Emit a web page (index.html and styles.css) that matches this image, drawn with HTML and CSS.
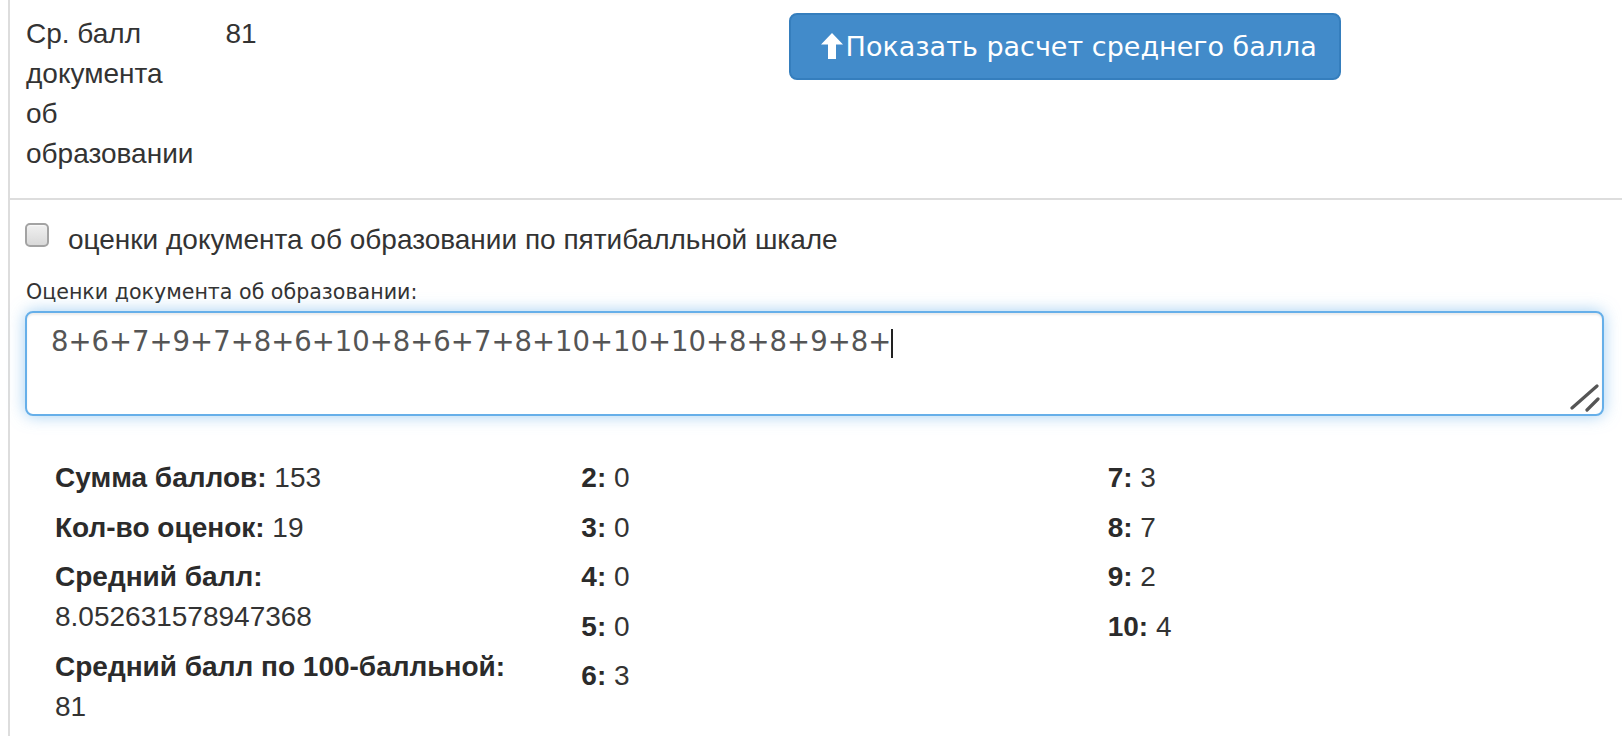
FILE: index.html
```html
<!DOCTYPE html>
<html lang="ru">
<head>
<meta charset="utf-8">
<title>Средний балл документа об образовании</title>
<link rel="stylesheet" href="styles.css">
</head>
<body>
<div class="page">
  <div class="row-top">
    <div class="cell cell-label">Ср. балл документа об образовании</div>
    <div class="cell cell-value">81</div>
    <div class="cell cell-action">
      <button class="btn-primary" type="button">
        <svg class="icon-up" viewBox="0 0 22 26" width="22" height="26" aria-hidden="true"><path d="M11 0 L22 11.5 L15 11.5 L15 26 L7 26 L7 11.5 L0 11.5 Z" fill="#fff"/></svg>
        <span>Показать расчет среднего балла</span>
      </button>
    </div>
  </div>
  <div class="row-main">
    <label class="check">
      <input class="check-box" type="checkbox">
      <span>оценки документа об образовании по пятибалльной шкале</span>
    </label>
    <label class="field-label" for="grades">Оценки документа об образовании:</label>
    <div class="textarea-wrap">
      <textarea id="grades" class="grades is-focused">8+6+7+9+7+8+6+10+8+6+7+8+10+10+10+8+8+9+8+</textarea>
      <span class="caret" aria-hidden="true"></span>
      <svg class="grip" viewBox="0 0 30 30" width="30" height="30" aria-hidden="true"><path d="M2 26 L27 4 M17 28 L28 17" stroke="#555" stroke-width="3.2" stroke-linecap="round" fill="none"/></svg>
    </div>
    <div class="stats">
      <div class="stats-col">
        <div class="stat"><b>Сумма баллов:</b> 153</div>
        <div class="stat"><b>Кол-во оценок:</b> 19</div>
        <div class="stat"><b>Средний балл:</b> <span class="stat-block">8.052631578947368</span></div>
        <div class="stat"><b>Средний балл по 100-балльной:</b> <span class="stat-block">81</span></div>
      </div>
      <div class="stats-col">
        <div class="stat"><b>2:</b> 0</div>
        <div class="stat"><b>3:</b> 0</div>
        <div class="stat"><b>4:</b> 0</div>
        <div class="stat"><b>5:</b> 0</div>
        <div class="stat"><b>6:</b> 3</div>
      </div>
      <div class="stats-col">
        <div class="stat"><b>7:</b> 3</div>
        <div class="stat"><b>8:</b> 7</div>
        <div class="stat"><b>9:</b> 2</div>
        <div class="stat"><b>10:</b> 4</div>
      </div>
    </div>
  </div>
</div>
</body>
</html>
```
FILE: styles.css
```css
* { box-sizing: border-box; }

html, body { height: 100%; }

body {
  margin: 0;
  font-family: "Liberation Sans", Arial, sans-serif;
  font-size: 28px;
  line-height: 40px;
  color: #333;
  background: #fff;
  overflow: hidden;
}

.page {
  margin-left: 8px;
  border-left: 2px solid #ddd;
  min-height: 100%;
}

/* top row */
.row-top {
  display: flex;
  align-items: flex-start;
  border-bottom: 2px solid #ddd;
}

.cell { padding: 14px 16px 24px; }

.cell-label { width: min-content; }

.cell-action { padding: 13px 0 0 516px; }

.btn-primary {
  display: flex;
  align-items: center;
  gap: 3px;
  width: 552px;
  height: 67px;
  padding: 0 0 0 30px;
  background: #428bca;
  border: 2px solid #357ebd;
  border-radius: 8px;
  color: #fff;
  font-family: "DejaVu Sans", Verdana, sans-serif;
  font-size: 27px;
  line-height: 40px;
  cursor: pointer;
}

.icon-up { flex: none; margin-top: -2px; }

/* main row */
.row-main { padding: 20px 18px 0 15px; }

.check {
  display: flex;
  align-items: flex-start;
  gap: 19px;
  font-weight: normal;
}

.check-box {
  appearance: none;
  -webkit-appearance: none;
  flex: none;
  width: 24px;
  height: 24px;
  margin: 3px 0 0 0;
  border: 2px solid #a3a3a3;
  border-radius: 5px;
  background: linear-gradient(#f0f0f0, #d9d9d9);
  box-shadow: inset 0 1px 1px rgba(255,255,255,.6);
}

.field-label {
  display: block;
  margin: 17px 0 4px 1px;
  font-family: "DejaVu Sans", Verdana, sans-serif;
  font-size: 20.6px;
  line-height: 30px;
  color: #333;
}

.textarea-wrap { position: relative; }

.grades {
  display: block;
  width: 100%;
  height: 105px;
  margin: 0;
  padding: 12px 24px;
  border: 2px solid #ccc;
  border-radius: 8px;
  font-family: "DejaVu Sans", Verdana, sans-serif;
  font-size: 27.5px;
  line-height: 33px;
  color: #555;
  resize: none;
  outline: none;
  overflow: hidden;
}

.grades.is-focused {
  border-color: #66afe9;
  box-shadow: inset 0 2px 2px rgba(0,0,0,.075), 0 0 16px rgba(102,175,233,.6);
}

.caret {
  position: absolute;
  left: 866px;
  top: 18px;
  width: 2px;
  height: 29px;
  background: #222;
  pointer-events: none;
}

.grip {
  position: absolute;
  right: 4px;
  bottom: 4px;
  pointer-events: none;
}

/* statistics */
.stats {
  display: grid;
  grid-template-columns: repeat(3, 1fr);
  margin-top: 42px;
}

.stats-col { padding: 0 30px; }

.stat { margin-bottom: 9.5px; }

.stat b { font-weight: 700; color: #2b2b2b; }

.stat-block { display: block; }
```
